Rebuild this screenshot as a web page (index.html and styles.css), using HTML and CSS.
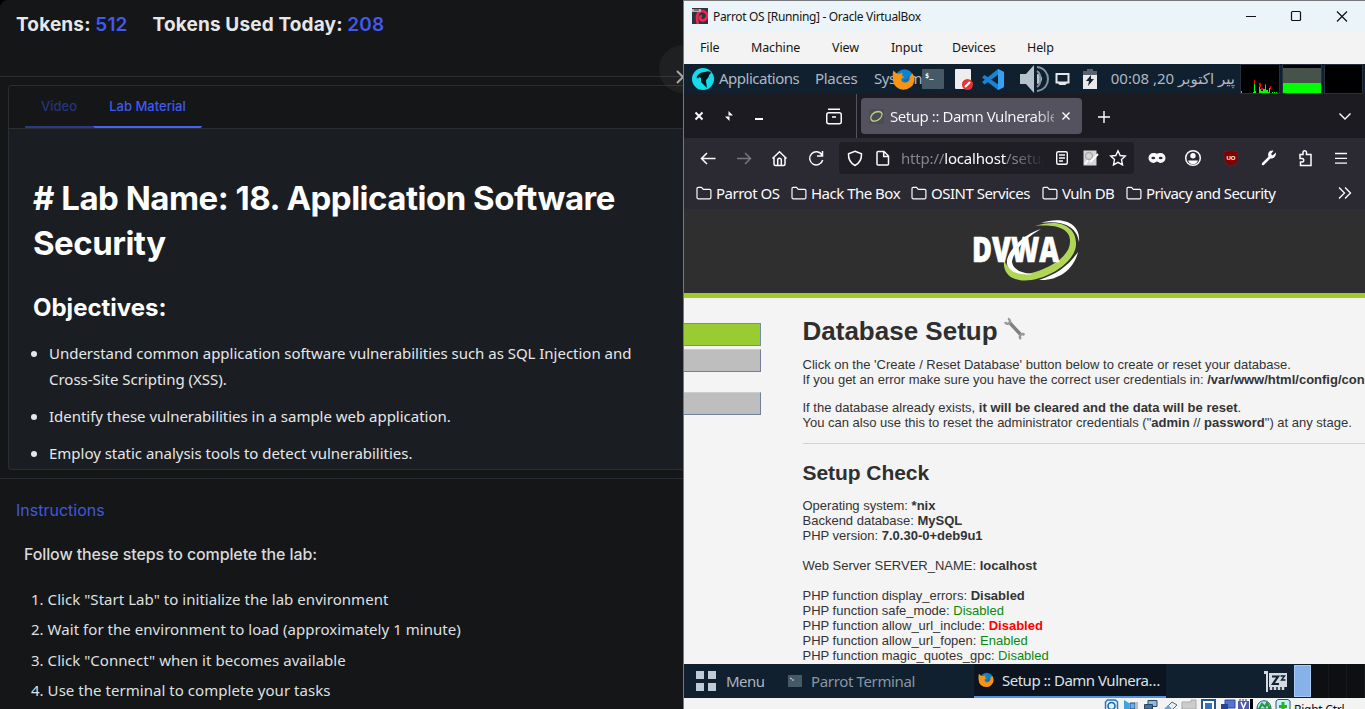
FILE: index.html
```html
<!DOCTYPE html>
<html lang="en">
<head>
<meta charset="utf-8">
<title>Lab</title>
<link rel="stylesheet" href="styles.css">
</head>
<body>
<svg width="0" height="0" class="defs">
  <symbol id="folder" viewBox="0 0 16 16"><path d="M1 12.5v-9A1.2 1.2 0 0 1 2.200 2.300H5.500L7.300 4.300H13.600A1.300 1.300 0 0 1 14.900 5.600V12.500A1.300 1.300 0 0 1 13.600 13.800H2.300A1.300 1.300 0 0 1 1 12.500z" fill="none" stroke="#fbfbfe" stroke-width="1.2"/></symbol>
  <symbol id="firefox" viewBox="0 0 24 24"><circle cx="13" cy="10.500" r="9.300" fill="#0b83d0"/><path d="M1.500 2.500 4.500 5.500 8 6 11 5 10.500 8 13 9.500 10 11c-1 3 2 5 5 4 3-.5 4-3 3.500-5.500L21 5.500c2 2 2.700 5 2.300 8A11.200 10.500 0 0 1 1 12.500C.8 9 .3 6 1.500 2.500z" fill="#f79413"/><path d="M12 12.500l4-1.500 2-3-1 5c-1 2-4 2-5-.5z" fill="#27639d"/></symbol>
</svg>
<div class="screen">
  <main class="lab">
    <header class="tokens"><span>Tokens: <b>512</b></span><span class="used">Tokens Used Today: <b>208</b></span></header>
    <button class="toggle"><svg width="12" height="16" viewBox="0 0 12 16"><path d="M3 2 9 8 3 14" fill="none" stroke="#a5a6a8" stroke-width="2"/></svg></button>
    <section class="material">
      <nav class="tabs"><span class="tab">Video</span><span class="tab active">Lab Material</span></nav>
      <article class="doc">
        <h1># Lab Name: 18. Application Software<br>Security</h1>
        <h2>Objectives:</h2>
        <ul>
          <li>Understand common application software vulnerabilities such as SQL Injection and<br>Cross-Site Scripting (XSS).</li>
          <li>Identify these vulnerabilities in a sample web application.</li>
          <li>Employ static analysis tools to detect vulnerabilities.</li>
        </ul>
      </article>
    </section>
    <section class="instructions">
      <h3>Instructions</h3>
      <h4>Follow these steps to complete the lab:</h4>
      <ol>
        <li>1. Click "Start Lab" to initialize the lab environment</li>
        <li>2. Wait for the environment to load (approximately 1 minute)</li>
        <li>3. Click "Connect" when it becomes available</li>
        <li>4. Use the terminal to complete your tasks</li>
      </ol>
    </section>
  </main>

  <section class="vm">
    <header class="title">
      <svg width="16" height="16" viewBox="0 0 16 16"><rect width="16" height="16" fill="#30333f"/><path d="M6 16C4 10 5 4 9 3c4-.5 7 3 6 6-1 3-4 4-6 3-2-2-1-4 1-4" fill="none" stroke="#ee2853" stroke-width="2.600"/><path d="M0 1h9v3H0z" fill="#b8aeb4"/><path d="M2 2h5" stroke="#433" /></svg>
      <span class="name">Parrot OS [Running] - Oracle VirtualBox</span>
      <svg class="controls" width="110" height="29" viewBox="0 0 110 29" fill="none" stroke="#111" stroke-width="1.200"><path d="M3 14.500h10M94 9.500l10 10M104 9.500l-10 10"/><rect x="48.500" y="9.500" width="9" height="9" rx="1"/></svg>
    </header>
    <nav class="menu"><span>File</span><span>Machine</span><span>View</span><span>Input</span><span>Devices</span><span>Help</span></nav>

    <div class="panel">
      <svg width="22" height="22" viewBox="0 0 22 22"><circle cx="11" cy="11" r="11" fill="#15dceb"/><path d="M4 11c1-4 4-7 9-7 4-2 6 0 6 1l-2 2c0 3-3 4-3 6l1 7-6-6 0-4-2-1-1 2-1-2z" fill="#08151c"/></svg>
      <span class="p-app">Applications</span><span class="p-pl">Places</span><span class="p-sy">System</span>
      <svg class="p-ff" width="23" height="23"><use href="#firefox"/></svg>
      <svg class="p-term" width="22" height="20" viewBox="0 0 22 20"><rect width="22" height="20" rx="1" fill="#455a64"/><text x="3" y="9" class="prompt">$_</text></svg>
      <svg class="p-doc" width="18" height="21" viewBox="0 0 18 21"><rect width="16" height="20" rx="1" fill="#eee"/><circle cx="12.500" cy="15.500" r="5.500" fill="#e83232"/><path d="M10 18l5-5" stroke="#fff" stroke-width="2.200"/></svg>
      <svg class="p-code" width="23" height="21" viewBox="0 0 23 21"><path d="M16 0 22 3v15l-6 3L0 8.500 2.500 6 17 16V5L2.500 15.500 0 13z" fill="#1b83d4"/><path d="M16 0l6 3v15l-6 3z" fill="#36a0f4"/></svg>
      <svg class="p-vol" width="31" height="28" viewBox="0 0 31 28"><path d="M1 9h6l8-9v28l-8-9H1z" fill="#b7c3cb"/><path d="M18 9a5 5 0 0 1 0 10z" fill="#b7c3cb"/><path d="M18 6a8 8 0 0 1 3 8 8 8 0 0 1-3 8M18 2c8 1 11 7 11 12s-3 11-11 12" fill="none" stroke="#8195a2" stroke-width="2"/></svg>
      <svg class="p-disp" width="15" height="14" viewBox="0 0 15 14"><path d="M1.500 2h12v8.500h-12zM3 10l2 2h5l2-2" fill="none" stroke="#e6e7e9" stroke-width="2"/></svg>
      <svg class="p-bat" width="14" height="20" viewBox="0 0 14 20"><path d="M0 6V2h4V0h6v2h4v4z" fill="#58636f"/><path d="M0 6h14v14H0z" fill="#e7e9eb"/><path d="M8 6 3 12h3l-1 5 6-7H8z" fill="#14212e"/></svg>
      <span class="clock" dir="rtl" lang="ur">پیر اکتوبر 20, 00:08</span>
      <svg class="graphs" width="123" height="30" viewBox="0 0 123 30" shape-rendering="crispEdges"><g stroke="#26303e"><rect x=".5" y=".5" width="39" height="29" fill="#000"/><rect x="42.500" y=".5" width="39" height="29" fill="#000"/><rect x="84.500" y=".5" width="38" height="29" fill="#000"/></g><path d="M43 4h38v15H43z" fill="#46534a"/><path d="M43 19h38v10H43z" fill="#0f0"/><path d="M14 16h1v5h-1zM19 19h2v4h-2zM21 24h2v2h-2zM25 20h1v4h-1zM30 22h1v3h-1z" fill="#f00"/><path d="M1 27h1v2H1zM13 28h1v-8h1v7h1v2h-3zM19 23h1v2h1v2h2v-2h2v-4h1v5h2v2h1v-4h1v5H19zM32 28h1v1h-1zM34 28h1v1h-1zM36 28h1v1h-1z" fill="#0f0"/></svg>
    </div>

    <div class="tabbar">
      <svg width="172" height="44" viewBox="0 0 172 44" fill="none" stroke="#fbfbfe" stroke-width="2"><path d="M11.500 18.500l7 7M18.500 18.500l-7 7M71 25h8"/><path d="M44.500 17v4.500h4.500zM45.500 27v-4.500H41z" fill="#fbfbfe" stroke="none"/><rect x="142.750" y="18.750" width="14.500" height="11" rx="2" stroke-width="1.500"/><path d="M144 15.200h12M148 23h4" stroke-width="1.500"/></svg>
      <div class="ftab">
        <svg width="15" height="15" viewBox="0 0 15 15"><rect width="15" height="15" fill="#4b4d53"/><path d="M2 10C1 6 5 3 9 2.500c5 0 5 4 2 7s-8 4-9 .5z" fill="none" stroke="#b9cf84" stroke-width="1.300"/></svg>
        <span class="ft">Setup :: Damn Vulnerable</span>
        <svg width="8" height="8" viewBox="0 0 8 8"><path d="M.5.500l7 7M7.500.500l-7 7" stroke="#fff" stroke-width="1.400"/></svg>
      </div>
      <svg class="plus" width="12" height="12" viewBox="0 0 12 12"><path d="M6 0v12M0 6h12" stroke="#fff" stroke-width="1.400"/></svg>
      <svg class="down" width="12" height="7" viewBox="0 0 12 7"><path d="M.5.500 6 6l5.500-5.500" fill="none" stroke="#fff" stroke-width="1.400"/></svg>
    </div>

    <div class="toolbar">
      <svg width="155" height="42" viewBox="0 0 155 42" fill="none" stroke="#fbfbfe" stroke-width="1.500"><path d="M17.500 20.500h14M23 15l-5.500 5.500L23 26"/><path d="M53 20.500h14M61 15l5.500 5.500L61 26" stroke="#77767e"/><path d="M88.500 20.500l7-6.800 7 6.800M90 19.500v6.500a1.500 1.500 0 0 0 1.500 1.500h8a1.500 1.500 0 0 0 1.500-1.500v-6.500M93.700 27v-5a1.800 1.800 0 0 1 3.600 0v5"/><path d="M138 17a6.600 6.600 0 1 0 .7 5M138.500 13v5h-5.500"/></svg>
      <div class="url">
        <svg width="62" height="32" viewBox="0 0 62 32" fill="none" stroke="#fbfbfe" stroke-width="1.500"><path d="M16 9.200l6.500 2.500c.3 5-1.500 9-6.500 11.800-5-2.800-6.800-6.800-6.500-11.800z"/><path d="M39 9.500h6l4.500 4.500v8a1 1 0 0 1-1 1H39a1 1 0 0 1-1-1V10.500a1 1 0 0 1 1-1zM44.700 10v4.500h4.500"/></svg>
        <span class="addr">http://<b>localhost</b>/setup</span>
        <svg width="90" height="32" viewBox="0 0 90 32" fill="none" stroke="#fbfbfe" stroke-width="1.400"><rect x="12.700" y="9.700" width="10.600" height="12.600" rx="1.500"/><path d="M15 13h6M15 16h6M15 19h4"/><rect x="39.500" y="8.500" width="13" height="15" fill="#d6d6d8" stroke="none"/><circle cx="45" cy="14" r="3.500" stroke="#aaa"/><path d="M41 22l3-4M46 20l8-8" stroke="#fff" stroke-width="2"/><path d="M74 8.800l2.200 4.700 5.100.6-3.800 3.500 1 5.200-4.500-2.500-4.500 2.500 1-5.200-3.800-3.500 5.100-.6z"/></svg>
      </div>
      <svg width="215" height="42" viewBox="0 0 215 42" fill="none" stroke="#fbfbfe" stroke-width="1.500"><path d="M19.500 15c1.500 0 2.500.7 3.500.7s2-.7 3.500-.7a5 5 0 0 1 0 10c-1.500 0-2.500-1.500-3.500-1.500S21 25 19.500 25a5 5 0 0 1 0-10z" fill="#fbfbfe" stroke="none"/><ellipse cx="19.300" cy="20" rx="1.900" ry="1.300" fill="#2b2a33" stroke="none"/><ellipse cx="26.700" cy="20" rx="1.900" ry="1.300" fill="#2b2a33" stroke="none"/><circle cx="59" cy="20" r="7.300"/><circle cx="59" cy="17.800" r="2.700" fill="#fbfbfe" stroke="none"/><path d="M54 22.500h10c-1 3-3 3.500-5 3.500s-4-.5-5-3.500z" fill="#fbfbfe" stroke="none"/><path d="M97 12.500q3 1 7 1v7c0 4-3 6-7 7.500-4-1.500-7-3.500-7-7.500v-7q4 0 7-1z" fill="#800000" stroke="#6a2a2a" stroke-width=".5"/><text x="97" y="22" class="ub">UO</text><path d="M129 26l7-7" stroke-width="2.500" stroke-linecap="round"/><path d="M142 14.500l-3.500 3-1.500-1.500 2.500-3.300c-3.500-.7-6.500 2-5 5.800 1.500 3.500 7.500 2.500 7.500-4z" fill="#fbfbfe" stroke="none"/><path d="M166 16.500h3v-2a1.700 1.700 0 0 1 3.500 0v2h4.500v11h-10.500v-3.500h1.500a1.700 1.700 0 0 0 0-3.500h-2z"/><path d="M201 15.500h12M201 20.300h12M201 25.200h12" stroke-width="1.300"/></svg>
    </div>

    <div class="bookmarks">
      <svg width="16" height="16"><use href="#folder"/></svg><span class="b1">Parrot OS</span>
      <svg width="16" height="16"><use href="#folder"/></svg><span class="b2">Hack The Box</span>
      <svg width="16" height="16"><use href="#folder"/></svg><span class="b3">OSINT Services</span>
      <svg width="16" height="16"><use href="#folder"/></svg><span class="b4">Vuln DB</span>
      <svg width="16" height="16"><use href="#folder"/></svg><span class="b5">Privacy and Security</span>
      <svg class="more" width="14" height="12" viewBox="0 0 14 12"><path d="M1 .5 6.500 6 1 11.500M7 .5 12.500 6 7 11.500" fill="none" stroke="#fff" stroke-width="1.300"/></svg>
    </div>

    <div class="brand">
      <svg width="112" height="66" viewBox="0 0 112 66"><path d="M70 5C90-2 110 4 108 24 106 9 92 2 70 5z" fill="#fff"/><path d="M107 34c-4 17-19 29-39 28 18-6 29-14 39-28z" fill="#fff"/><path d="M64 8C88 0 106 8 105 27 104 46 70 66 48 62 36 60 32 52 33 42 38 54 50 58 64 54 84 48 99 36 99 24 100 10 84 6 64 8z" fill="#b0d655"/><path d="M70 11C50 17 34 36 36 46c2 8 13 12 26 10-13-1-20-5-21-12C42 34 54 20 70 11z" fill="#fff"/><text x="1" y="44" class="dv" textLength="87" lengthAdjust="spacingAndGlyphs">DVWA</text></svg>
    </div>

    <div class="site">
      <aside><i class="on"></i><i></i><i class="gap"></i></aside>
      <div class="page">
        <h1>Database Setup <svg width="22" height="24" viewBox="0 0 22 24"><path d="M5 6l12 13" stroke="#808080" stroke-width="3.400"/><path d="M4 2.500a3 3 0 0 1 1 5A3 3 0 0 1 1 6M20.500 19a3 3 0 0 0-4 0 3 3 0 0 0 .5 4" fill="none" stroke="#999" stroke-width="2.400"/></svg></h1>
        <p>Click on the 'Create / Reset Database' button below to create or reset your database.<br>If you get an error make sure you have the correct user credentials in: <b>/var/www/html/config/con</b></p>
        <p>If the database already exists, <b>it will be cleared and the data will be reset</b>.<br>You can also use this to reset the administrator credentials ("<b>admin</b> // <b>password</b>") at any stage.</p>
        <hr>
        <h2>Setup Check</h2>
        <div class="checks">Operating system: <b>*nix</b><br>Backend database: <b>MySQL</b><br>PHP version: <b>7.0.30-0+deb9u1</b><br><br>Web Server SERVER_NAME: <b>localhost</b><br><br>PHP function display_errors: <b>Disabled</b><br>PHP function safe_mode: <span class="ok">Disabled</span><br>PHP function allow_url_include: <b class="bad">Disabled</b><br>PHP function allow_url_fopen: <span class="ok">Enabled</span><br>PHP function magic_quotes_gpc: <span class="ok">Disabled</span></div>
      </div>
    </div>

    <div class="taskbar">
      <svg width="20" height="20" viewBox="0 0 20 20"><path d="M0 0h8v8H0zM12 0h8v8h-8zM0 12h8v8H0zM12 12h8v8h-8z" fill="#c0c9d6"/></svg>
      <span class="t-menu">Menu</span>
      <svg width="14" height="12" viewBox="0 0 14 12"><rect width="14" height="12" fill="#455a64"/><path d="M2 3l2 1M4 5h2" stroke="#ddd"/></svg>
      <span class="t-term">Parrot Terminal</span>
      <div class="t-act"><svg width="16" height="16"><use href="#firefox"/></svg><span>Setup :: Damn Vulnera…</span></div>
      <svg class="t-zz" width="23" height="21" viewBox="0 0 23 21"><path d="M0 0h4v21H2V3H0zM5 2h18v14H5z" fill="#d5dae2"/><path d="M7 16v3M11 16v3M15 16v3M19 16v3" stroke="#d5dae2" stroke-width="2.500"/><path d="M8 5.500h6l-5 7.500h6" fill="none" stroke="#14212e" stroke-width="2.200"/><path d="M16.500 5h4l-3 4h4" fill="none" stroke="#14212e" stroke-width="1.400"/></svg>
      <i class="w1"></i><i class="w2"></i><i class="w2"></i><i class="w2"></i>
    </div>

    <footer class="status">
      <svg width="190" height="11" viewBox="0 0 190 11" fill="none"><path d="M1.500 11V4l2-2h8l2 2v7" fill="#e2f3ff" stroke="#2879bb" stroke-width="1.500"/><circle cx="7.500" cy="8" r="3.500" stroke="#1768ad" stroke-width="1.600"/><path d="M20 2l5 3v6h-5z" fill="#3ea5de"/><path d="M26 5h5v6h-5z" fill="#5eb5ef" stroke="#347" /><path d="M31 4h3v7h-3z" fill="#bbb"/><path d="M44 2.500h9v6h-9z" fill="#8bbbe8" stroke="#345"/><path d="M40.500 6.500h8V11h-8z" fill="#3a72ba" stroke="#345"/><path d="M61 11l7-7 5 3-4 4" fill="#e8edf2" stroke="#567"/><path d="M60 11l4-4 4 4" fill="#69a6d6"/><path d="M78 11V4h9V2h5v9z" fill="#ccc" stroke="#aaa"/><path d="M98 11V2h13v9" fill="#fff" stroke="#24578f" stroke-width="2"/><path d="M101 5h7v6h-7z" fill="#3474bc"/><path d="M121 2h10v8h-10z" fill="#5276cf" stroke="#3049a0"/><path d="M117 6h7v5h-7z" fill="#2b4396"/><path d="M134 3h11v8h-11z" fill="#505bb0"/><path d="M136 1v2M139 1v2M142 1v2" stroke="#336"/><path d="M137 4l2.500 6 2.500-6" stroke="#fff" stroke-width="1.500"/><path d="M146 1h3v10h-3z" fill="#000"/><path d="M153 11c0-11 14-11 14 0z" fill="#b5e3f7" stroke="#356"/><path d="M155 11l3-5 3 3 2-4 3 6" stroke="#16a529" stroke-width="2.200"/><path d="M172 11V3l2-1.500h10l2 1.500v8" fill="#c9f0f8" stroke="#357"/><path d="M179 4v7M175 8.500h8" stroke="#25b51e" stroke-width="3"/></svg>
      <span>Right Ctrl</span>
    </footer>
  </section>
</div>
</body>
</html>
```
FILE: styles.css
```css
* { box-sizing: border-box; }
body { margin: 0; background: #000; overflow: hidden; }
svg { display: block; flex: none; }
h1, h2, h3, h4, p, ul, ol { margin: 0; padding: 0; }
.defs { position: absolute; }
.screen { display: flex; width: 1365px; height: 709px; overflow: hidden; }

/* Lab pane */
.lab { position: relative; width: 683px; height: 709px; flex: none; overflow: hidden; background: #151618; border-top-left-radius: 8px; color: #e6e7e8; font-family: Inter, sans-serif; }
.tokens { display: flex; gap: 25px; height: 77px; padding: 13px 0 0 16px; border-bottom: 1px solid #2e2f33; font-weight: 650; font-size: 19px; line-height: 24px; letter-spacing: .15px; }
.tokens b { color: #4059ee; font-weight: 600; }
.toggle { position: absolute; left: 659px; top: 45px; width: 48px; height: 48px; border: 0; border-radius: 50%; background: rgba(255,255,255,.045); padding: 16px 0 0 15px; }
.material { margin: 8px 0 0 8px; height: 385px; border: 1px solid #2b2d32; border-right: 0; border-radius: 4px 0 0 4px; overflow: hidden; background: #1a1e23; }
.tabs { display: flex; height: 43px; padding-left: 16px; background: #151618; border-bottom: 1px solid #2b2d32; font-size: 13px; line-height: 41px; font-weight: 500; }
.tab { width: 68px; text-align: center; color: #27347a; border-bottom: 2px solid #2b3a88; height: 42px; }
.tab.active { width: 109px; color: #4059ee; border-color: #4263f5; border-radius: 0 0 2px 2px; }
.doc { padding: 47px 0 0 24px; }
.doc h1 { font-size: 33px; line-height: 45px; font-weight: 700; letter-spacing: -.5px; color: #fff; white-space: nowrap; }
.doc h2 { margin-top: 25px; font-size: 24px; line-height: 33px; font-weight: 700; color: #fff; }
.doc ul { list-style: none; margin-top: 16px; font: 15px/26px "Noto Sans", sans-serif; letter-spacing: -.02px; white-space: nowrap; }
.doc li { position: relative; padding-left: 16px; margin-bottom: 11px; }
.doc li::before { content: ""; position: absolute; left: -2px; top: 11px; width: 6px; height: 6px; border-radius: 50%; background: #e6e7e8; }
.instructions { margin-top: 8px; border-top: 1px solid #2b2d32; padding: 21px 0 0 16px; }
.instructions h3 { font-size: 16px; line-height: 20px; font-weight: 400; color: #4059d8; }
.instructions h4 { margin: 24px 0 0 8px; font-size: 16px; line-height: 20px; font-weight: 550; letter-spacing: -.12px; color: #d8d9da; }
.instructions ol { list-style: none; margin: 20px 0 0 15px; font: 15px/30.400px "Noto Sans", sans-serif; letter-spacing: .04px; color: #dfe0e1; }

/* Virtual machine window */
.vm { position: relative; width: 682px; height: 709px; flex: none; overflow: hidden; background: #f3f3f3; border: solid #77787a; border-width: 1px 0 0 1px; font-family: "Noto Sans", sans-serif; white-space: nowrap; }
.title { display: flex; align-items: center; height: 30px; padding-left: 8px; background: #ebf4f9; color: #151515; font-size: 12px; }
.title .name { margin-left: 5px; letter-spacing: -.33px; }
.controls { margin-left: auto; margin-right: 12px; }
.menu { display: grid; grid-template-columns: 51px 81px 59px 61px 75px auto; padding-left: 16px; height: 33px; line-height: 33px; font-size: 12.500px; letter-spacing: -.12px; color: #151515; }
.panel, .ftab, .url, .bookmarks, .taskbar { font-size: 15px; letter-spacing: -.5px; }
.panel { display: flex; align-items: center; height: 30px; padding-left: 8px; background: #11202f; color: #aeb8c2; }
.panel span { margin-top: -2px; }
.panel .p-app { margin-left: 5px; width: 96px; flex: none; }
.p-pl { width: 59px; flex: none; letter-spacing: -.3px; }
.p-sy { width: 18px; flex: none; }
.p-ff { z-index: 1; }
.p-term { margin-left: 7px; z-index: 1; }
.prompt { font: bold 7px "DejaVu Sans Mono", monospace; fill: #fff; letter-spacing: 0; }
.p-doc { margin-left: 11px; }
.p-code { margin-left: 9px; }
.p-vol { margin-left: 14px; }
.p-disp { margin-left: 5px; }
.p-bat { margin-left: 13px; }
.panel .clock { margin-left: 13px; width: 125px; letter-spacing: 0; font-family: "Noto Sans", "DejaVu Sans", sans-serif; }
.graphs { margin-left: auto; margin-right: 2px; }

.tabbar { display: flex; height: 44px; background: #1c1b22; color: #fbfbfe; }
.tabbar > svg:first-child { box-sizing: content-box; border-right: 1px solid #55545c; }
.ftab { display: flex; align-items: center; width: 221px; height: 36px; margin: 4px 0 0 4px; padding-left: 8px; border-radius: 4px; background: #53525e; }
.ft { margin: 0 8px 0 6px; width: 164px; flex: none; letter-spacing: -.45px; background: linear-gradient(90deg, #fbfbfe 88%, #9c9ba4); -webkit-background-clip: text; color: transparent; }
.plus { margin: 17px 0 0 16px; }
.down { margin: 19px 14px 0 auto; }
.toolbar { display: flex; height: 42px; background: #2b2a33; }
.url { display: flex; align-items: center; width: 295px; height: 32px; margin-top: 4px; border-radius: 4px; background: #1f1e25; color: #85848c; }
.addr { width: 143px; letter-spacing: -.18px; mask-image: linear-gradient(90deg, #000 80%, transparent); }
.addr b { font-weight: 400; color: #fbfbfe; }
.ub { font: bold 6px "Liberation Sans", sans-serif; fill: #fff; stroke: none; text-anchor: middle; }
.bookmarks { display: flex; align-items: center; height: 29px; padding: 0 0 3px 12px; background: #2b2a33; color: #fbfbfe; }
.bookmarks span { margin-left: 4px; flex: none; }
.b1 { width: 75px; } .b2 { width: 100px; } .b3 { width: 111px; } .b4 { width: 64px; }
.b5 { letter-spacing: -.58px; }
.more { margin: 0 13px 0 auto; }

.brand { height: 89px; padding: 9px 0 0 287px; background: #2f2f2f; border-bottom: 5px solid #9fcb2f; }
.dv { font: 800 35px "Open Sans", sans-serif; fill: #fff; stroke: #fff; stroke-width: .6px; }
.site { display: flex; height: 366px; overflow: hidden; background: #f4f4f4; }
aside { width: 77px; padding-top: 25px; flex: none; }
aside i { display: block; height: 23px; margin-bottom: 3px; background: #bebebe; border: solid #718099; border-width: 1px 1px 1px 0; border-top-color: #ccc; }
aside i.on { background: #9c3; border-color: #718ea5; }
aside .gap { margin-top: 20px; }
.page { margin-left: 41.500px; padding-top: 18px; width: 700px; flex: none; font: 13px/15px "Liberation Sans", sans-serif; color: #333; }
.page h1 { display: flex; gap: 6px; font-size: 26px; line-height: 30px; color: #2f2f2f; }
.page p { margin-top: 11px; }
.page p + p { margin-top: 13px; }
.page hr { border: 0; border-top: 1px solid #c8d3ea; margin: 13px 0 0; }
.page h2 { margin-top: 16px; font-size: 21px; line-height: 25px; letter-spacing: -.06px; color: #2f2f2f; }
.checks { margin-top: 13px; }
.ok { color: #0a8a0a; } .bad { color: #f00; }

.taskbar { display: flex; align-items: center; height: 34px; padding-left: 12px; background: #11202f; color: #aab5c0; }
.t-menu { margin-left: 10px; width: 62px; flex: none; }
.t-term { margin-left: 9px; width: 163px; flex: none; letter-spacing: -.35px; color: #8796a4; }
.t-act { display: flex; align-items: center; gap: 8px; width: 192px; height: 34px; padding-left: 4px; background: #0c151f; border-bottom: 2px solid #5294e2; color: #dce2e8; }
.t-zz { margin-left: 98px; }
.w1 { width: 17px; height: 32px; margin-left: 7px; background: #86b2e9; border: 1px solid #a7c9f3; }
.w2 { width: 18px; height: 34px; background: #0e0f12; border-right: 1px solid #17191d; flex: none; }
.status { display: flex; height: 11px; padding: 0 0 0 420px; color: #111; font-size: 12px; letter-spacing: -.25px; line-height: 23px; }
```
